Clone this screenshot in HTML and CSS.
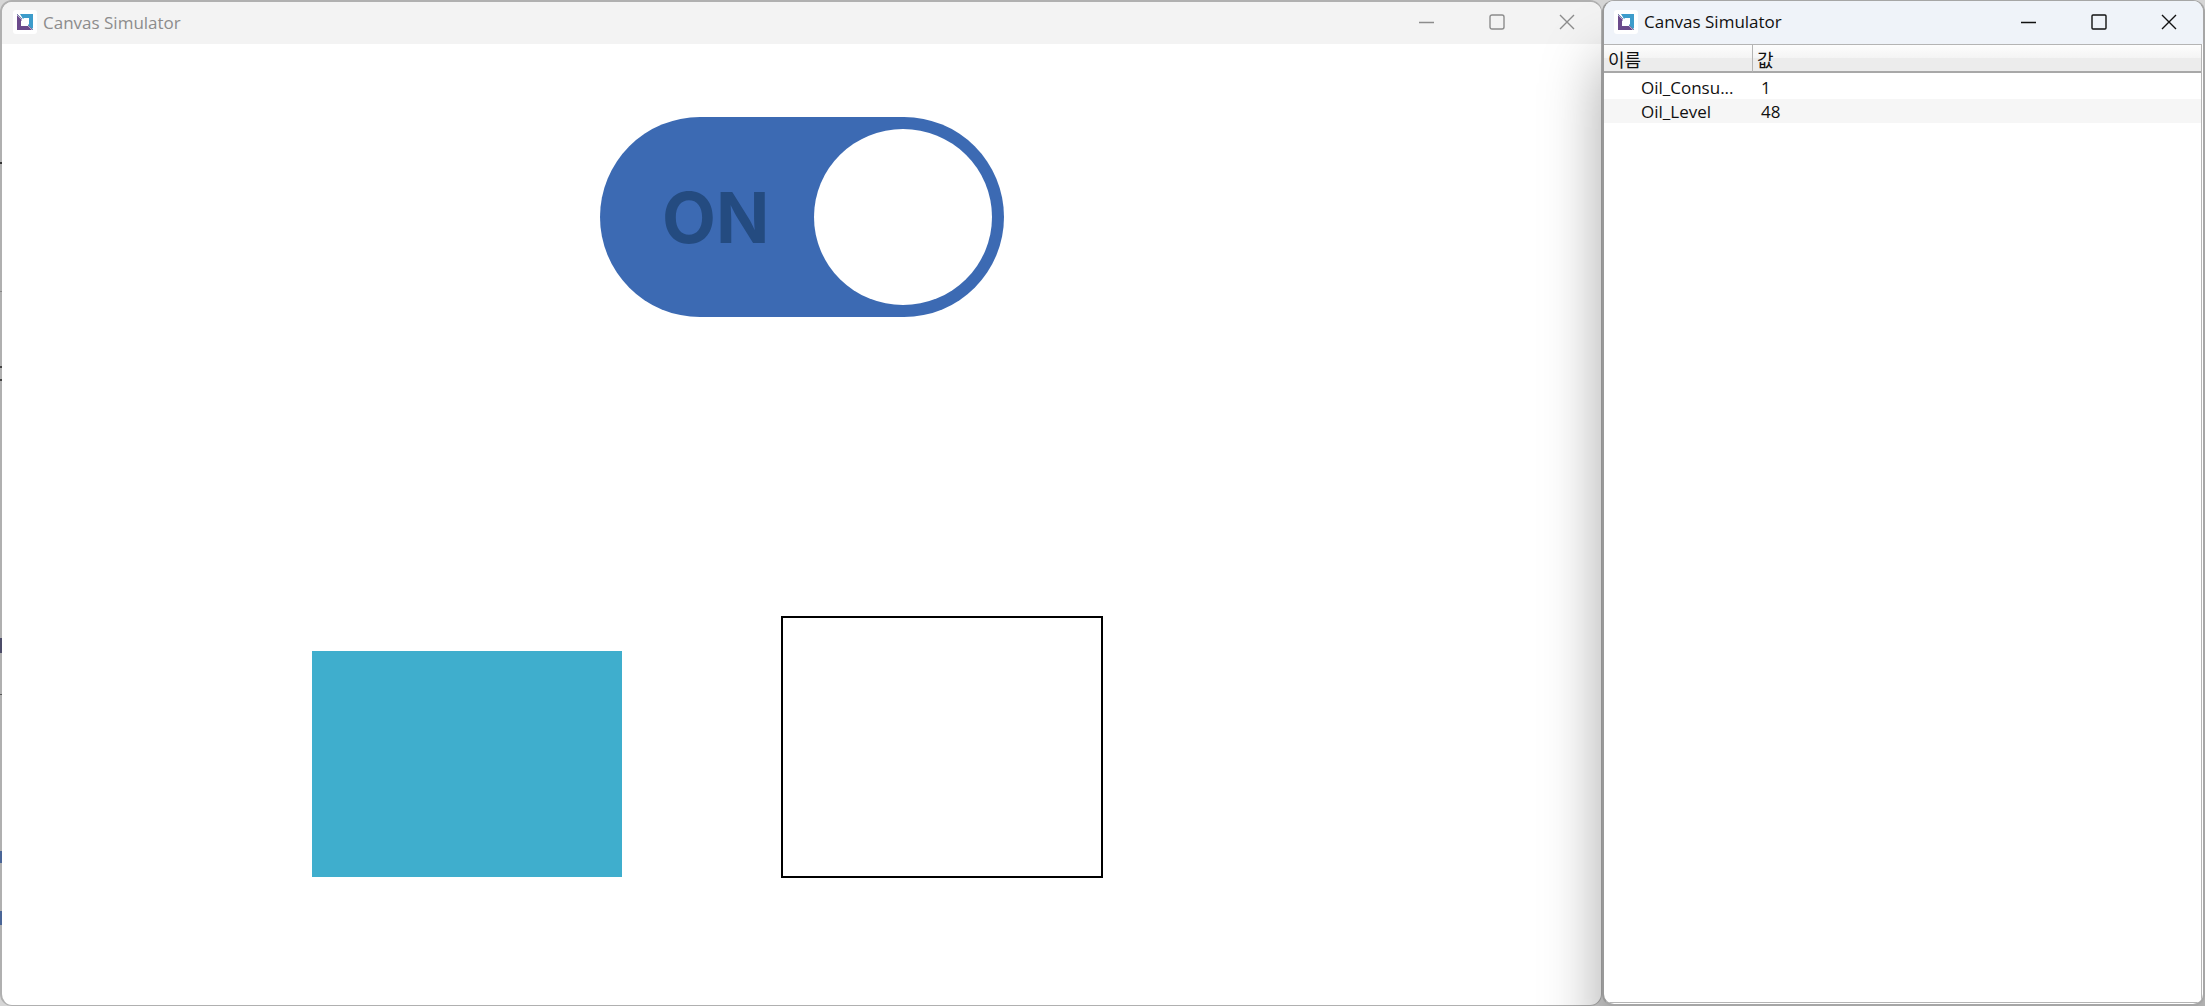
FILE: index.html
```html
<!DOCTYPE html>
<html lang="ko">
<head>
    <meta charset="UTF-8">
    <meta name="viewport" content="width=device-width, initial-scale=1.0">
    <title>Canvas Simulator</title>
    <link rel="stylesheet" href="styles.css">
</head>
<body>
    <!-- Shared logo -->
    <svg class="symbols" aria-hidden="true">
        <symbol id="logo" viewBox="0 0 24 24">
            <rect width="24" height="24" rx="3" fill="#fff"/>
            <path d="M4 5l5 5-1 1v5h7l4 4H4z" fill="#6b4a8c"/>
            <path d="M7 4h13v14l-1 1-4-4 1-1V8h-5l-1 1z" fill="#3d9ccb"/>
            <path d="M4 4l5 5M15 15l5 5" stroke="#5a6a9c" stroke-width="0.8"/>
        </symbol>
    </svg>

    <div class="desktop">
        <!-- Canvas window -->
        <main class="window canvas-window">
            <header class="titlebar">
                <svg class="logo"><use href="#logo"/></svg>
                <h1>Canvas Simulator</h1>
                <div class="controls">
                    <button aria-label="Minimize"><svg viewBox="0 0 16 16"><path d="M0 8.5h15"/></svg></button>
                    <button aria-label="Maximize"><svg viewBox="0 0 16 16"><rect x="1" y="1" width="14" height="14" rx="2"/></svg></button>
                    <button aria-label="Close"><svg viewBox="0 0 16 16"><path d="M1 1l14 14M15 1L1 15"/></svg></button>
                </div>
            </header>
            <div class="canvas">
                <label class="toggle">
                    <input type="checkbox" checked>
                    <span class="toggle-text">ON</span>
                    <span class="knob"></span>
                </label>
                <div class="oil-level"></div>
                <div class="tank"></div>
            </div>
        </main>

        <!-- Variables window -->
        <aside class="window values-window">
            <header class="titlebar">
                <svg class="logo"><use href="#logo"/></svg>
                <h1>Canvas Simulator</h1>
                <div class="controls">
                    <button aria-label="Minimize"><svg viewBox="0 0 16 16"><path d="M0 8.5h15"/></svg></button>
                    <button aria-label="Maximize"><svg viewBox="0 0 16 16"><rect x="1" y="1" width="14" height="14" rx="1"/></svg></button>
                    <button aria-label="Close"><svg viewBox="0 0 16 16"><path d="M1 1l14 14M15 1L1 15"/></svg></button>
                </div>
            </header>
            <div class="panel">
                <table>
                    <thead>
                        <tr><th class="name">이름</th><th>값</th></tr>
                    </thead>
                    <tbody>
                        <tr><td>Oil_Consu...</td><td>1</td></tr>
                        <tr><td>Oil_Level</td><td>48</td></tr>
                    </tbody>
                </table>
            </div>
        </aside>
    </div>
</body>
</html>
```

FILE: styles.css
```css
* {
    margin: 0;
    padding: 0;
    box-sizing: border-box;
}

body {
    background: #d6d6d6;
    color: #111;
    font-family: 'Open Sans', 'Noto Sans CJK KR', sans-serif;
    font-size: 17px;
}

.symbols {
    display: none;
}

.desktop {
    position: relative;
    display: grid;
    grid-template-columns: minmax(0, 1fr) 603px;
    height: 100vh;
    overflow: hidden;
}

/* Bits of the application behind, along the left edge */
.desktop::before {
    content: '';
    position: absolute;
    top: 0;
    left: 0;
    width: 2px;
    height: 100%;
    background: linear-gradient(
        transparent 162px, #333 162px 164px,
        transparent 164px 291px, #888 291px 292px,
        transparent 292px 366px, #444 366px 368px,
        transparent 368px 379px, #444 379px 381px,
        transparent 381px 638px, #4c4c68 638px 653px,
        transparent 653px 694px, #555 694px 695px,
        transparent 695px 851px, #4a6596 851px 863px,
        transparent 863px 911px, #4a6596 911px 925px,
        transparent 925px
    );
}

.window {
    display: flex;
    flex-direction: column;
    overflow: hidden;
    border: 2px solid #b0b0b0;
    border-radius: 12px;
    background: #fff;
}

.canvas-window {
    border-right-width: 1px;
    border-bottom-width: 1px;
}

.values-window {
    position: relative;
    border-color: #a6a6a6;
    border-left-color: #999;
    border-top-width: 1px;
    border-right-width: 2px;
    box-shadow: 0 60px 60px rgba(0, 0, 0, 0.35);
}

/* Title bars */
.titlebar {
    display: flex;
    align-items: center;
    height: 42px;
    padding: 0 18px 2px 11px;
    background: #f3f3f3;
    color: #8c8c8c;
}

.values-window .titlebar {
    height: 43px;
    padding-left: 10px;
    background: #eff3f9;
    color: #111;
}

.titlebar h1 {
    flex: 1;
    margin-left: 6px;
    font-size: 17px;
    font-weight: 400;
}

.logo {
    width: 24px;
    height: 24px;
}

.controls {
    display: flex;
    gap: 38px;
}

.controls button {
    width: 32px;
    height: 32px;
    border: none;
    background: none;
    color: inherit;
}

.controls svg {
    display: block;
    width: 16px;
    height: 16px;
    margin: auto;
    fill: none;
    stroke: currentColor;
    stroke-width: 1.4;
}

/* Canvas shapes */
.canvas {
    position: relative;
    flex: 1;
}

.toggle {
    position: absolute;
    top: 73px;
    left: 598px;
    display: flex;
    align-items: center;
    justify-content: space-between;
    width: 404px;
    height: 200px;
    padding: 0 12px 0 62px;
    border-radius: 100px;
    background: #3c6ab3;
    cursor: pointer;
}

.toggle input {
    position: absolute;
    opacity: 0;
}

.toggle-text {
    color: #244b80;
    font-family: Inter, sans-serif;
    font-size: 70px;
    font-weight: 700;
}

.knob {
    width: 178px;
    height: 176px;
    border-radius: 50%;
    background: #fff;
}

.oil-level {
    position: absolute;
    top: 607px;
    left: 310px;
    width: 310px;
    height: 226px;
    background: #3faecd;
}

.tank {
    position: absolute;
    top: 572px;
    left: 779px;
    width: 322px;
    height: 262px;
    border: 2px solid #000;
}

/* Variable table */
.panel {
    flex: 1;
    border: 1px solid #b4b4b4;
    border-left: none;
    margin: 0 1px 1px 0;
}

table {
    width: 100%;
    table-layout: fixed;
    border-collapse: separate;
    border-spacing: 0;
}

th {
    height: 28px;
    padding: 4px 4px 0;
    border-bottom: 2px solid #a8a8a8;
    background: linear-gradient(#fdfdfd, #f4f4f4 50%, #ececec 51%, #ececec);
    font-size: 18px;
    font-weight: 400;
    line-height: 22px;
    text-align: left;
}

th.name {
    width: 149px;
    border-right: 1px solid #b4b4b4;
}

td {
    height: 24px;
    padding: 2px 0 0 8px;
    line-height: 22px;
}

tbody tr:first-child td {
    height: 26px;
    padding-top: 4px;
}

td:first-child {
    padding-left: 37px;
}

tbody tr:nth-child(even) {
    background: #f6f6f6;
}
```
